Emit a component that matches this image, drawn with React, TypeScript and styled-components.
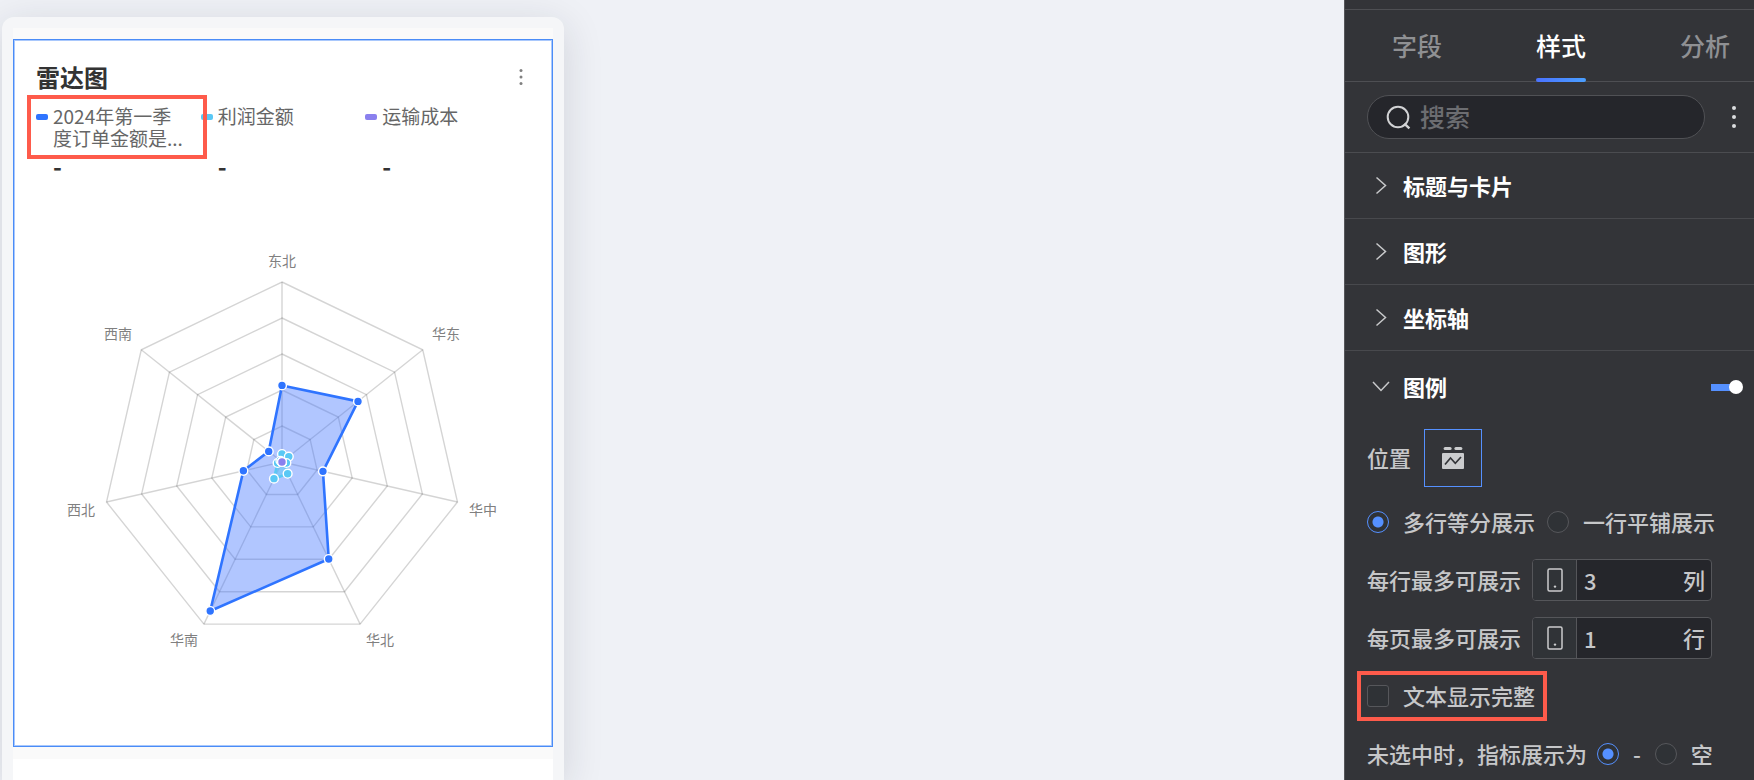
import React, { useState } from 'react';
import styled, { createGlobalStyle, css } from 'styled-components';

const GlobalStyle = createGlobalStyle`
  *, *::before, *::after { box-sizing: border-box; }
  body {
    margin: 0;
    background: #eff1f6;
    font-family: "Noto Sans CJK SC", "Noto Sans", sans-serif;
  }
  button, input { font: inherit; color: inherit; margin: 0; padding: 0; }
  h2, h3, ul, dl, dd, p { margin: 0; padding: 0; font: inherit; }
`;

const highlight = css`
  position: relative;
  &::after {
    content: "";
    position: absolute;
    border: 4px solid #fe5b4b;
    pointer-events: none;
  }
`;

const Page = styled.div`
  display: flex;
  height: 100vh;
  overflow: hidden;
`;

/* ---------- canvas ---------- */

const Canvas = styled.main`
  flex: 1;
  min-width: 0;
  padding: 17px 2px 0;
  background: #eff1f6;
`;

const Device = styled.div`
  display: flex;
  flex-direction: column;
  width: 562px;
  max-width: 100%;
  height: 100%;
  padding: 11px 11px 0;
  border-radius: 12px 12px 0 0;
  background: #f5f6f8;
  box-shadow: 0 8px 40px rgba(30, 35, 50, 0.14);
`;

const Screen = styled.div`
  display: flex;
  flex-direction: column;
  flex: 1;
  gap: 12px;
  padding-top: 11px;
  background: #fafafa;
`;

const ChartCard = styled.section`
  flex: none;
  border: 1px solid #4a8cf7;
  background: #fff;
  box-shadow: inset 0 0 0 1px #a9c8fc;
`;

const NextCard = styled.section`
  flex: 1;
  min-height: 40px;
  background: #fff;
`;

const CardHeader = styled.header`
  display: flex;
  align-items: center;
  justify-content: space-between;
  height: 65px;
  padding: 8px 22px 0;
`;

const CardTitle = styled.h2`
  font-size: 24px;
  line-height: 36px;
  font-weight: 700;
  color: #333;
`;

const MenuButton = styled.button<{ $color: string }>`
  display: flex;
  align-items: center;
  justify-content: center;
  width: 18px;
  height: 32px;
  border: 0;
  background: none;
  color: ${(p) => p.$color};
`;

const Legend = styled.dl`
  display: grid;
  grid-template-columns: repeat(3, 1fr);
  padding: 0 22px 7px;
`;

const LegendItem = styled.div<{ $marked?: boolean }>`
  padding-left: 17px;
  ${(p) =>
    p.$marked &&
    css`
      ${highlight}
      &::after {
        inset: -10px auto auto -9px;
        width: 180px;
        height: 64px;
        z-index: 1;
      }
    `}
`;

const LegendName = styled.dt<{ $color: string }>`
  position: relative;
  width: 132px;
  min-height: 44px;
  font-size: 19px;
  line-height: 22px;
  color: #666;
  &::before {
    content: "";
    position: absolute;
    left: -17px;
    top: 9px;
    width: 12px;
    height: 6px;
    border-radius: 2px;
    background: ${(p) => p.$color};
  }
`;

const LegendValue = styled.dd`
  font-size: 24px;
  line-height: 34px;
  font-weight: 700;
  color: #333;
`;

const Radar = styled.svg`
  display: block;
  width: 100%;
  height: auto;
`;

const AxisLabel = styled.text`
  font-size: 14px;
  fill: #808080;
  text-anchor: middle;
`;

/* ---------- settings panel ---------- */

const Panel = styled.aside`
  flex: none;
  width: 410px;
  border-left: 1px solid #55565a;
  background: #333438;
  color: #c6c7c9;
  font-size: 22px;
  line-height: 32px;
  font-weight: 500;
`;

const Tabs = styled.nav`
  display: flex;
  justify-content: space-between;
  height: 73px;
  margin-top: 9px;
  padding: 0 24px 0 47px;
  border: solid #4e4f53;
  border-width: 1px 0;
`;

const Tab = styled.button<{ $active: boolean }>`
  position: relative;
  padding-bottom: 2px;
  border: 0;
  background: none;
  font-size: 25px;
  color: ${(p) => (p.$active ? '#fff' : '#8f9093')};
  ${(p) =>
    p.$active &&
    css`
      &::after {
        content: "";
        position: absolute;
        left: 0;
        right: 0;
        bottom: -1px;
        height: 4px;
        border-radius: 2px;
        background: linear-gradient(90deg, #4a72ff, #4a9fff);
      }
    `}
`;

const SearchRow = styled.div`
  display: flex;
  align-items: center;
  justify-content: space-between;
  height: 71px;
  padding: 0 11px 0 22px;
  border-bottom: 1px solid #4b4c50;
`;

const SearchBox = styled.label`
  display: flex;
  align-items: center;
  gap: 9px;
  flex: 1;
  max-width: 338px;
  height: 44px;
  padding: 0 18px;
  border: 1px solid #505155;
  border-radius: 22px;
  background: #25262b;
`;

const SearchInput = styled.input`
  flex: 1;
  min-width: 0;
  padding-bottom: 2px;
  border: 0;
  outline: 0;
  background: none;
  font-size: 25px;
  line-height: 36px;
  &::placeholder { color: #6c6d71; opacity: 1; }
`;

const SectionRow = styled.div<{ $open?: boolean }>`
  display: flex;
  align-items: center;
  justify-content: space-between;
  height: ${(p) => (p.$open ? 72 : 66)}px;
  padding: 0 11px 0 26px;
  border-bottom: ${(p) => (p.$open ? '0' : '1px solid #48494d')};
`;

const SectionButton = styled.button`
  display: flex;
  align-items: center;
  gap: 12px;
  border: 0;
  background: none;
  font-weight: 700;
  color: #fff;
`;

const Caption = styled.span`
  padding-bottom: 2px;
`;

const Switch = styled.input`
  appearance: none;
  position: relative;
  width: 32px;
  height: 14px;
  background: linear-gradient(#5590ff, #5590ff) left center / 28px 7px no-repeat;
  border-radius: 4px 7px 7px 4px;
  &::after {
    content: "";
    position: absolute;
    right: 0;
    top: 0;
    width: 14px;
    height: 14px;
    border-radius: 50%;
    background: #fff;
  }
`;

const SectionBody = styled.div`
  padding: 6px 0 0 22px;
`;

const Row = styled.div<{ $gap?: number }>`
  display: flex;
  align-items: center;
  gap: ${(p) => p.$gap ?? 0}px;
  height: 58px;
  white-space: nowrap;
`;

const PositionRow = styled(Row)`
  margin-bottom: 6px;
`;

const FieldLabel = styled.label<{ $width: number }>`
  width: ${(p) => p.$width}px;
  padding-bottom: 2px;
`;

const PositionButton = styled.button`
  display: flex;
  align-items: center;
  justify-content: center;
  width: 58px;
  height: 58px;
  border: 1px solid #5590ff;
  background: none;
`;

const Choice = styled.label<{ $marked?: boolean }>`
  display: flex;
  align-items: center;
  gap: 14px;
  ${(p) =>
    p.$marked &&
    css`
      ${highlight}
      &::after {
        inset: -8px -12px -8px -10px;
      }
    `}
`;

const Radio = styled.input`
  appearance: none;
  width: 22px;
  height: 22px;
  border: 1px solid #56575b;
  border-radius: 50%;
  background: #2f3236;
  &:checked {
    border-color: #5590ff;
    background: radial-gradient(circle, #5590ff 5px, #2f3236 6px);
  }
`;

const Tick = styled.input`
  appearance: none;
  width: 22px;
  height: 22px;
  border: 1px solid #56575b;
  border-radius: 3px;
  background: #2f3236;
  &:checked { background: #5590ff; }
`;

const NumberBox = styled.div`
  display: flex;
  width: 180px;
  height: 42px;
  border: 1px solid #55565a;
  border-radius: 4px;
  overflow: hidden;
  background: #25262b;
`;

const NumberIcon = styled.span`
  display: flex;
  align-items: center;
  justify-content: center;
  width: 44px;
  border-right: 1px solid #55565a;
  background: #303337;
`;

const NumberInput = styled.input`
  flex: 1;
  min-width: 0;
  padding-left: 7px;
  border: 0;
  outline: 0;
  background: none;
`;

const Unit = styled.span`
  padding: 3px 6px;
`;

/* ---------- chart ---------- */

const CX = 282;
const CY = 462;
const R = 180;
const AXES = [
  { name: '东北', x: 282, y: 266 },
  { name: '华东', x: 446, y: 339 },
  { name: '华中', x: 483, y: 515 },
  { name: '华北', x: 380, y: 645 },
  { name: '华南', x: 184, y: 645 },
  { name: '西北', x: 81, y: 515 },
  { name: '西南', x: 118, y: 339 },
];
const SERIES = [
  { color: '#2f74ff', fill: 'rgba(70,120,255,0.42)', values: [76.6, 97.2, 42, 107.7, 165.4, 39.6, 17] },
  { color: '#5ac8f5', fill: 'rgba(90,200,245,0.5)', values: [8, 8.7, 4.5, 13, 18.5, 4.5, 2] },
  { color: '#8a80ee', fill: 'none', values: [0, 0, 0, 0, 0, 0, 0] },
];

const point = (i: number, r: number): [number, number] => {
  const a = (i * 2 * Math.PI) / AXES.length;
  return [CX + r * Math.sin(a), CY - r * Math.cos(a)];
};
const polygon = (values: number[]) => values.map((v, i) => point(i, v).join(',')).join(' ');

function RadarChart() {
  return (
    <Radar viewBox="14 190 538 556" role="img" aria-label="雷达图">
      <g stroke="#000" strokeOpacity="0.17" strokeWidth="1.4" fill="none">
        {[0.2, 0.4, 0.6, 0.8, 1].map((k) => (
          <polygon key={k} points={polygon(AXES.map(() => R * k))} />
        ))}
        {AXES.map((axis, i) => {
          const [x, y] = point(i, R);
          return <line key={axis.name} x1={CX} y1={CY} x2={x} y2={y} />;
        })}
      </g>
      {SERIES.map((s) => (
        <polygon
          key={s.color}
          points={polygon(s.values)}
          fill={s.fill}
          stroke={s.color}
          strokeWidth="2.6"
          strokeLinejoin="round"
        />
      ))}
      {SERIES.map((s) =>
        s.values.map((v, i) => {
          const [x, y] = point(i, v);
          return <circle key={s.color + i} cx={x} cy={y} r="4.4" fill={s.color} stroke="#fff" strokeWidth="1.4" />;
        }),
      )}
      {AXES.map((axis) => (
        <AxisLabel key={axis.name} x={axis.x} y={axis.y}>
          {axis.name}
        </AxisLabel>
      ))}
    </Radar>
  );
}

/* ---------- icons ---------- */

const Dots = ({ r, step }: { r: number; step: number }) => (
  <svg width="6" height="26" viewBox="0 0 6 26" fill="currentColor" aria-hidden="true">
    {[-step, 0, step].map((d) => (
      <circle key={d} cx="3" cy={13 + d} r={r} />
    ))}
  </svg>
);

const Chevron = ({ open }: { open?: boolean }) => (
  <svg width="20" height="20" viewBox="0 0 20 20" fill="none" stroke="#c8c9cb" strokeWidth="1.5" aria-hidden="true">
    <path d={open ? 'M2 5 L10 13.5 L18 5' : 'M5.5 1.5 L14.5 9.5 L5.5 17.5'} />
  </svg>
);

const SearchIcon = () => (
  <svg width="25" height="25" viewBox="0 0 25 25" fill="none" stroke="#d2d3d5" strokeWidth="2" aria-hidden="true">
    <circle cx="12" cy="12" r="10.3" />
    <path d="M18.3 18.6 L23.4 23.4" strokeWidth="2.4" />
  </svg>
);

const LegendTopIcon = () => (
  <svg width="22" height="24" viewBox="0 0 22 24" aria-hidden="true">
    <g fill="#cbccce">
      <rect x="1.6" y="1" width="8" height="3" rx="1.5" />
      <rect x="12.4" y="1" width="8" height="3" rx="1.5" />
      <rect x="0" y="7" width="22" height="16" rx="1" />
    </g>
    <path d="M3 18.5 L8.5 12 L13.3 17.3 L19 11" fill="none" stroke="#333438" strokeWidth="1.7" />
  </svg>
);

const PhoneIcon = () => (
  <svg width="16" height="24" viewBox="0 0 16 24" fill="none" stroke="#cbccce" strokeWidth="1.5" aria-hidden="true">
    <rect x="1" y="1" width="14" height="22" rx="1.5" />
    <circle cx="8" cy="18.6" r="1.2" fill="#cbccce" stroke="none" />
  </svg>
);

/* ---------- page ---------- */

const TABS = ['字段', '样式', '分析'];
const LEGEND = [
  { name: '2024年第一季度订单金额是...', color: '#2f74ff', marked: true },
  { name: '利润金额', color: '#5ac8f5' },
  { name: '运输成本', color: '#8a80ee' },
];
const CLOSED_SECTIONS = ['标题与卡片', '图形', '坐标轴'];
const LIMITS = [
  { id: 'cols', label: '每行最多可展示', value: '3', unit: '列' },
  { id: 'rows', label: '每页最多可展示', value: '1', unit: '行' },
];

export default function App() {
  const [tab, setTab] = useState('样式');
  return (
    <Page>
      <GlobalStyle />
      <Canvas>
        <Device>
          <Screen>
            <ChartCard>
              <CardHeader>
                <CardTitle>雷达图</CardTitle>
                <MenuButton $color="#808080" aria-label="更多">
                  <Dots r={1.5} step={6.5} />
                </MenuButton>
              </CardHeader>
              <Legend>
                {LEGEND.map((item) => (
                  <LegendItem key={item.name} $marked={item.marked}>
                    <LegendName $color={item.color}>{item.name}</LegendName>
                    <LegendValue>-</LegendValue>
                  </LegendItem>
                ))}
              </Legend>
              <RadarChart />
            </ChartCard>
            <NextCard />
          </Screen>
        </Device>
      </Canvas>

      <Panel>
        <Tabs>
          {TABS.map((name) => (
            <Tab key={name} $active={name === tab} onClick={() => setTab(name)}>
              {name}
            </Tab>
          ))}
        </Tabs>
        <SearchRow>
          <SearchBox>
            <SearchIcon />
            <SearchInput type="text" placeholder="搜索" aria-label="搜索" />
          </SearchBox>
          <MenuButton $color="#dcdddf" aria-label="更多设置">
            <Dots r={2} step={9} />
          </MenuButton>
        </SearchRow>

        {CLOSED_SECTIONS.map((name) => (
          <SectionRow key={name}>
            <SectionButton aria-expanded={false}>
              <Chevron />
              <Caption>{name}</Caption>
            </SectionButton>
          </SectionRow>
        ))}

        <SectionRow $open>
          <SectionButton aria-expanded>
            <Chevron open />
            <Caption>图例</Caption>
          </SectionButton>
          <Switch type="checkbox" role="switch" aria-label="图例" defaultChecked />
        </SectionRow>

        <SectionBody>
          <PositionRow>
            <FieldLabel $width={57} htmlFor="position">位置</FieldLabel>
            <PositionButton id="position">
              <LegendTopIcon />
            </PositionButton>
          </PositionRow>
          <Row $gap={12}>
            <Choice>
              <Radio type="radio" name="layout" defaultChecked />
              <Caption>多行等分展示</Caption>
            </Choice>
            <Choice>
              <Radio type="radio" name="layout" />
              <Caption>一行平铺展示</Caption>
            </Choice>
          </Row>
          {LIMITS.map((limit) => (
            <Row key={limit.id}>
              <FieldLabel $width={165} htmlFor={limit.id}>{limit.label}</FieldLabel>
              <NumberBox>
                <NumberIcon>
                  <PhoneIcon />
                </NumberIcon>
                <NumberInput id={limit.id} type="text" inputMode="numeric" defaultValue={limit.value} />
                <Unit>{limit.unit}</Unit>
              </NumberBox>
            </Row>
          ))}
          <Row>
            <Choice $marked>
              <Tick type="checkbox" />
              <Caption>文本显示完整</Caption>
            </Choice>
          </Row>
          <Row $gap={14}>
            <FieldLabel as="span" $width={216}>未选中时，指标展示为</FieldLabel>
            <Choice>
              <Radio type="radio" name="empty" defaultChecked />
              <Caption>-</Caption>
            </Choice>
            <Choice>
              <Radio type="radio" name="empty" />
              <Caption>空</Caption>
            </Choice>
          </Row>
        </SectionBody>
      </Panel>
    </Page>
  );
}
